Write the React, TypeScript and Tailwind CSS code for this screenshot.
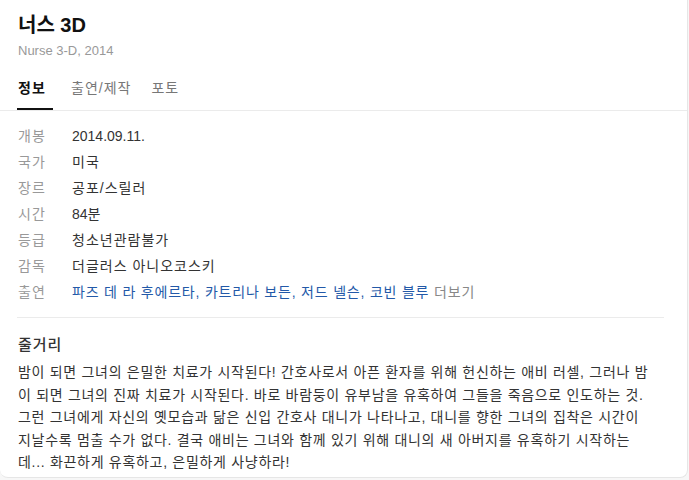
import React from 'react';

const font = { fontFamily: '"Liberation Sans", "Noto Sans CJK KR", sans-serif' };

const rows: { label: string; value: string; ko?: boolean }[] = [
    { label: '개봉', value: '2014.09.11.' },
    { label: '국가', value: '미국', ko: true },
    { label: '장르', value: '공포/스릴러', ko: true },
    { label: '시간', value: '84분' },
    { label: '등급', value: '청소년관람불가', ko: true },
    { label: '감독', value: '더글러스 아니오코스키', ko: true },
];

const cast = ['파즈 데 라 후에르타', '카트리나 보든', '저드 넬슨', '코빈 블루'];

const story = [
    '밤이 되면 그녀의 은밀한 치료가 시작된다! 간호사로서 아픈 환자를 위해 헌신하는 애비 러셀, 그러나 밤',
    '이 되면 그녀의 진짜 치료가 시작된다. 바로 바람둥이 유부남을 유혹하여 그들을 죽음으로 인도하는 것.',
    '그런 그녀에게 자신의 옛모습과 닮은 신입 간호사 대니가 나타나고, 대니를 향한 그녀의 집착은 시간이',
    '지날수록 멈출 수가 없다. 결국 애비는 그녀와 함께 있기 위해 대니의 새 아버지를 유혹하기 시작하는',
    '데... 화끈하게 유혹하고, 은밀하게 사냥하라!',
];

const App: React.FC = () => {
    return (
        <div className="min-h-screen bg-[#f7f7f7]" style={font}>
            <div className="w-[688px] h-[478px] bg-white border-r border-b border-[#e6e6e6] rounded-b-lg overflow-hidden">
                <div className="px-[18px] pt-[11px]">
                    <h1 className="text-[20px] leading-[28px] font-bold text-[#111]">너스 3D</h1>
                    <p className="mt-[3px] text-[13px] leading-[18px] text-[#999]">Nurse 3-D, 2014</p>
                    <nav className="mt-[18px] flex text-[14px] leading-[20px] tracking-[1px]">
                        <span className="pb-[10px] w-[36px] border-b-2 border-[#111] font-bold text-[#111] -ml-px pl-px">정보</span>
                        <span className="ml-[18px] text-[#777]">출연/제작</span>
                        <span className="ml-[20px] text-[#777]">포토</span>
                    </nav>
                </div>
                <div className="border-t border-[#ebebeb]" />
                <div className="pl-[17px] pr-[23px]">
                    <dl className="pt-[12px] pb-[12px] border-b border-[#ebebeb] text-[14px] leading-[26px]">
                        {rows.map((r) => (
                            <div key={r.label} className="flex">
                                <dt className="w-[55px] pl-px text-[#999] tracking-[1px]">{r.label}</dt>
                                <dd className={r.ko ? 'text-[#333] tracking-[1px]' : 'text-[#333]'}>{r.value}</dd>
                            </div>
                        ))}
                        <div className="flex">
                            <dt className="w-[55px] pl-px text-[#999] tracking-[1px]">출연</dt>
                            <dd className="text-[#2359a8] tracking-[0.8px]">
                                {cast.map((c, i) => (
                                    <span key={c}>
                                        {c}
                                        {i < cast.length - 1 ? ', ' : ' '}
                                    </span>
                                ))}
                                <span className="text-[#888]">더보기</span>
                            </dd>
                        </div>
                    </dl>
                    <h2 className="mt-[17px] pl-px text-[15px] leading-[20px] font-medium text-[#333] tracking-[1px]">줄거리</h2>
                    <div className="mt-[6px] pl-px text-[14px] leading-[22.5px] text-[#333] tracking-[0.7px]">
                        {story.map((line) => (
                            <p key={line} className="whitespace-nowrap">{line}</p>
                        ))}
                    </div>
                </div>
            </div>
        </div>
    );
};

export default App;
